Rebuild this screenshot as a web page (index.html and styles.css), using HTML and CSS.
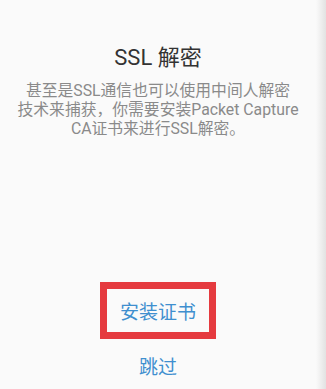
FILE: index.html
```html
<!DOCTYPE html>
<html lang="zh-CN">
<head>
  <meta charset="UTF-8">
  <meta name="viewport" content="width=device-width, initial-scale=1.0">
  <title>SSL 解密</title>
  <link rel="stylesheet" href="styles.css">
</head>
<body>
  <div class="screen">
    <div class="page">
      <div class="intro">
        <h1 class="title">SSL 解密</h1>
        <p class="desc">甚至是SSL通信也可以使用中间人解密<br>技术来捕获，你需要安装Packet Capture<br>CA证书来进行SSL解密。</p>
      </div>
      <div class="actions">
        <div class="install-box">
          <span class="link">安装证书</span>
        </div>
        <span class="link skip">跳过</span>
      </div>
    </div>
    <div class="edge"></div>
  </div>
</body>
</html>
```

FILE: styles.css
```css
body {
  margin: 0;
  padding: 0;
  background-color: #fafafa;
  font-family: Roboto, "Noto Sans CJK SC", sans-serif;
}
.screen {
  display: flex;
  height: 389px;
  overflow: hidden;
}
/* Contenido principal */
.page {
  flex: 1;
  display: flex;
  flex-direction: column;
  align-items: center;
}
.intro {
  padding-top: 44px;
  text-align: center;
}
.title {
  margin: 0;
  font-size: 22px;
  font-weight: normal;
  color: #333;
  line-height: 28px;
}
.desc {
  margin: 9px 0 0;
  font-size: 15.8px;
  line-height: 19px;
  color: #8a8a8a;
  white-space: nowrap;
}
/* Botones inferiores */
.actions {
  margin-top: auto;
  display: flex;
  flex-direction: column;
  align-items: center;
  padding-bottom: 8px;
}
.install-box {
  width: 102px;
  height: 43px;
  border: 7px solid #e53a3f;
  display: flex;
  align-items: center;
  justify-content: center;
}
.link {
  font-size: 19px;
  color: #3f8fcf;
}
.skip {
  margin-top: 16px;
  line-height: 26px;
}
/* Sombra del borde derecho */
.edge {
  width: 10px;
  background: linear-gradient(to right, #fafafa, #e2e2e2);
}
```
